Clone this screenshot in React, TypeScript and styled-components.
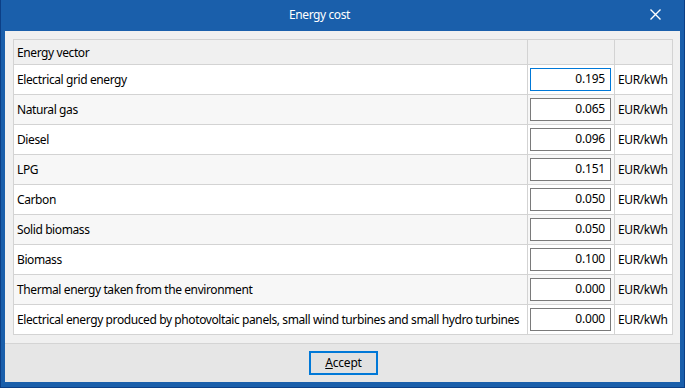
import React, { useState } from 'react';
import styled, { createGlobalStyle } from 'styled-components';

interface EnergyRow {
  name: string;
  value: string;
}

const ROWS: EnergyRow[] = [
  { name: 'Electrical grid energy', value: '0.195' },
  { name: 'Natural gas', value: '0.065' },
  { name: 'Diesel', value: '0.096' },
  { name: 'LPG', value: '0.151' },
  { name: 'Carbon', value: '0.050' },
  { name: 'Solid biomass', value: '0.050' },
  { name: 'Biomass', value: '0.100' },
  { name: 'Thermal energy taken from the environment', value: '0.000' },
  {
    name: 'Electrical energy produced by photovoltaic panels, small wind turbines and small hydro turbines',
    value: '0.000',
  },
];

const App: React.FC = () => {
  const [values, setValues] = useState<string[]>(ROWS.map((r) => r.value));

  const handleChange = (index: number, value: string) => {
    const next = [...values];
    next[index] = value;
    setValues(next);
  };

  return (
    <>
      <GlobalStyle />
      <Window>
        <TitleBar>
          <Title>Energy cost</Title>
          <CloseButton aria-label='Close'>
            <svg width='11' height='11' viewBox='0 0 11 11'>
              <path d='M0.5 0.5 L10.5 10.5 M10.5 0.5 L0.5 10.5' stroke='#fff' strokeWidth='1.4' />
            </svg>
          </CloseButton>
        </TitleBar>
        <Body>
          <Content>
            <Grid>
              <HeaderCell>Energy vector</HeaderCell>
              <HeaderCell />
              <HeaderCell />
              {ROWS.map((row, i) => (
                <React.Fragment key={row.name}>
                  <NameCell $shaded={i % 2 === 1}>{row.name}</NameCell>
                  <InputCell $shaded={i % 2 === 1}>
                    <ValueInput
                      $focused={i === 0}
                      value={values[i]}
                      onChange={(e) => handleChange(i, e.target.value)}
                    />
                  </InputCell>
                  <UnitCell $shaded={i % 2 === 1}>EUR/kWh</UnitCell>
                </React.Fragment>
              ))}
            </Grid>
          </Content>
          <Footer>
            <AcceptButton>
              <u>A</u>ccept
            </AcceptButton>
          </Footer>
        </Body>
      </Window>
    </>
  );
};

const GlobalStyle = createGlobalStyle`
  html, body {
    margin: 0;
    padding: 0;
    background: #ffffff;
  }
  body {
    font-family: 'Noto Sans', 'Open Sans', sans-serif;
    font-size: 12px;
    letter-spacing: -0.4px;
    color: #000;
  }
`;

const Window = styled.div`
  width: 685px;
  height: 388px;
  box-sizing: border-box;
  background: #1a5fab;
  border: 1px solid #0c3f86;
  border-top: none;
  display: flex;
  flex-direction: column;
`;

const TitleBar = styled.div`
  height: 31px;
  display: flex;
  align-items: center;
  padding-left: 4px;
  padding-right: 4px;
`;

const Title = styled.div`
  flex: 1;
  text-align: center;
  color: #fff;
  font-size: 12px;
  padding-bottom: 2px;
`;

const CloseButton = styled.div`
  width: 46px;
  height: 29px;
  display: flex;
  align-items: center;
  justify-content: center;
  padding-right: 4px;
  padding-bottom: 2px;
  box-sizing: border-box;
`;

const Body = styled.div`
  flex: 1;
  margin: 0 4px 5px 4px;
  background: #f0f0f0;
  display: flex;
  flex-direction: column;
`;

const Content = styled.div`
  padding: 8px 8px 0 8px;
  height: 312px;
  box-sizing: border-box;
`;

const Grid = styled.div`
  display: grid;
  grid-template-columns: 514px 87px 58px;
  grid-auto-rows: 30px;
  grid-template-rows: 25px;
  border-top: 1px solid #d3d3d3;
  border-left: 1px solid #d3d3d3;
  width: 660px;
  box-sizing: border-box;
`;

const Cell = styled.div<{ $shaded?: boolean }>`
  box-sizing: border-box;
  border-right: 1px solid #d3d3d3;
  border-bottom: 1px solid #d3d3d3;
  background: ${(p) => (p.$shaded ? '#f7f7f7' : '#ffffff')};
  display: flex;
  align-items: center;
  white-space: nowrap;
  overflow: hidden;
`;

const HeaderCell = styled(Cell)`
  background: #f0f0f0;
  padding-left: 3px;
`;

const NameCell = styled(Cell)`
  padding-left: 3px;
`;

const InputCell = styled(Cell)`
  padding: 0 2px 0 2px;
`;

const UnitCell = styled(Cell)`
  padding-left: 3px;
`;

const ValueInput = styled.input<{ $focused?: boolean }>`
  width: 81px;
  height: 23px;
  box-sizing: border-box;
  border: 1px solid ${(p) => (p.$focused ? '#0078d7' : '#7a7a7a')};
  background: #fff;
  text-align: right;
  padding: 0 5px 2px 2px;
  font-family: 'Noto Sans', 'Open Sans', sans-serif;
  font-size: 12px;
  letter-spacing: -0.2px;
  color: #000;
  outline: none;
`;

const Footer = styled.div`
  flex: 1;
  background: #e6e6e6;
  border-top: 1px solid #d4d4d4;
  display: flex;
  justify-content: center;
  align-items: flex-start;
  padding-top: 7px;
`;

const AcceptButton = styled.button`
  width: 69px;
  height: 24px;
  box-sizing: border-box;
  border: 2px solid #0078d7;
  background: #e1e1e1;
  font-family: 'Noto Sans', 'Open Sans', sans-serif;
  font-size: 12px;
  letter-spacing: -0.2px;
  color: #000;
  padding: 0 0 1px 0;
  margin-left: 2px;
`;

export default App;
